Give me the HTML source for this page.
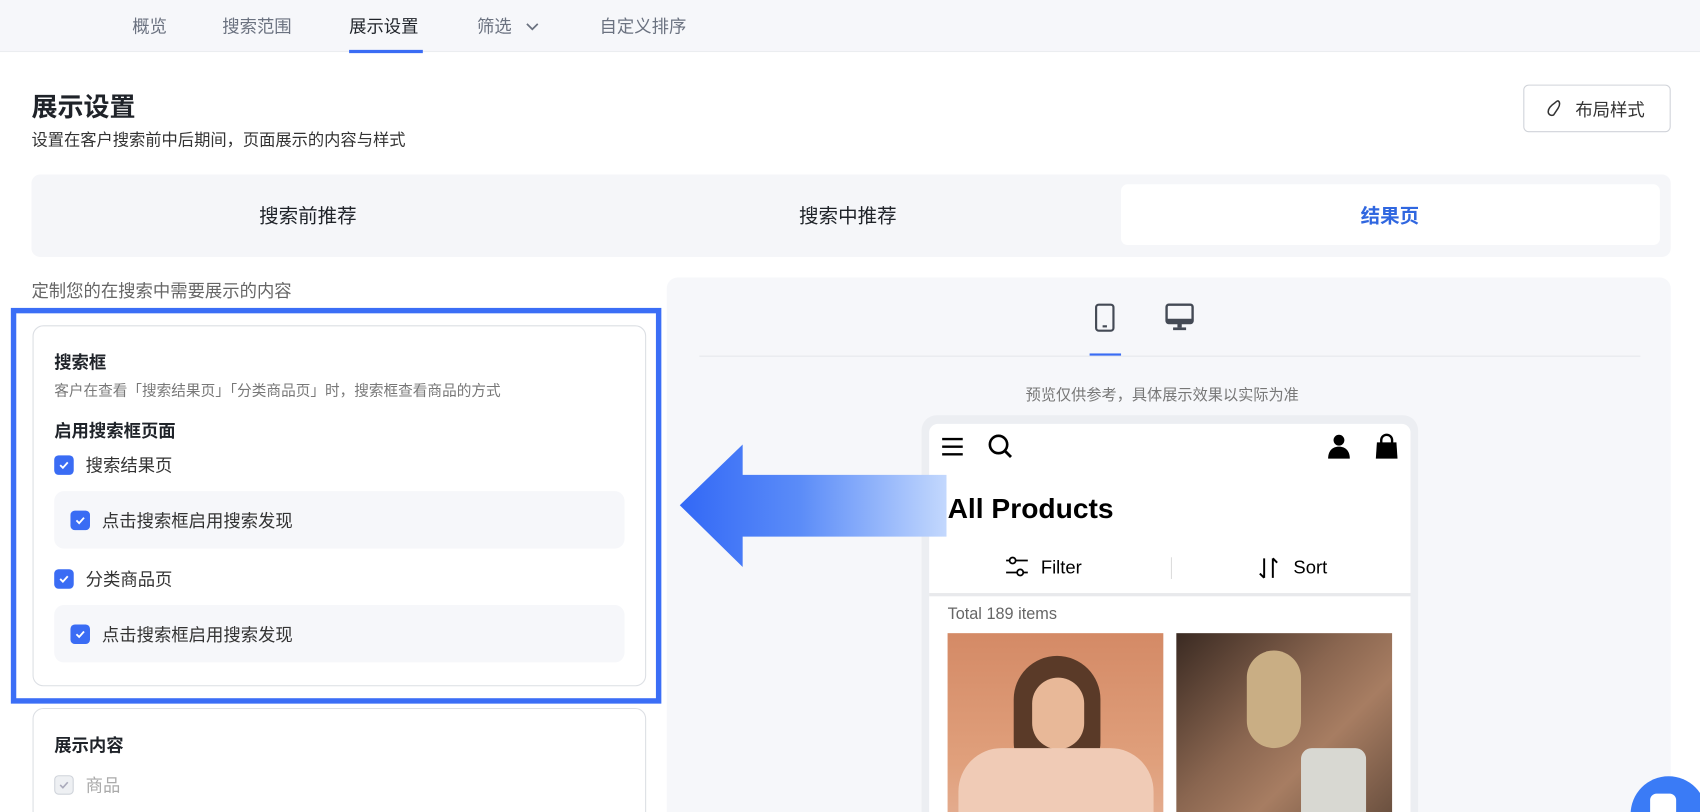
<!DOCTYPE html>
<html><head><meta charset="utf-8">
<style>
*{box-sizing:border-box;margin:0;padding:0}
html,body{width:1700px;height:812px;overflow:hidden;background:#fff}
body{font-family:"Liberation Sans","Noto Sans CJK SC",sans-serif;color:#1f2329}
#w{position:absolute;left:0;top:0;width:1568px;height:749px;transform:scale(1.08418);transform-origin:0 0;overflow:hidden;background:#fff}
.a{position:absolute}
.nav{left:0;top:0;width:1568px;height:48px;background:#f6f7fa;border-bottom:1px solid #ebedf0}
.ni{top:16px;font-size:16px;color:#6b7280}
.t{white-space:nowrap;line-height:1.3}
.cb{position:absolute;width:18px;height:18px;border-radius:4px;background:#3a6cf4}
.cb svg{position:absolute;left:3px;top:3px}
.sub{position:absolute;left:19px;width:526px;height:53px;background:#f6f7fa;border-radius:9px}
</style></head><body><div id="w">
<div class="a nav"></div>
<div class="a ni t" style="left:122px">概览</div>
<div class="a ni t" style="left:205px">搜索范围</div>
<div class="a ni t" style="left:322px;color:#1f2329">展示设置</div>
<div class="a" style="left:322px;top:46px;width:68px;height:3px;background:#3a6cf4"></div>
<div class="a ni t" style="left:440px">筛选</div>
<svg class="a" style="left:484px;top:20px" width="14" height="10" viewBox="0 0 14 10"><path d="M2 2l5 5 5-5" fill="none" stroke="#6b7280" stroke-width="1.6"/></svg>
<div class="a ni t" style="left:553px">自定义排序</div>

<div class="a t" style="left:29px;top:84px;font-size:24px;font-weight:bold">展示设置</div>
<div class="a t" style="left:29px;top:120px;font-size:15px;color:#333">设置在客户搜索前中后期间，页面展示的内容与样式</div>
<div class="a" style="left:1405px;top:78px;width:136px;height:44px;border:1px solid #d0d3d9;border-radius:5px;background:#fff"></div>
<svg class="a" style="left:1424px;top:90px" width="20" height="20" viewBox="0 0 20 20"><path d="M13 3c2 1 2 4 0 7l-4 6c-2 1-5 0-5-3 0-3 3-6 6-8 1-1 2-2 3-2z" fill="none" stroke="#333" stroke-width="1.4"/></svg>
<div class="a t" style="left:1453px;top:93px;font-size:16px;color:#333">布局样式</div>

<div class="a" style="left:29px;top:161px;width:1512px;height:76px;background:#f5f6f9;border-radius:8px"></div>
<div class="a t" style="left:239px;top:188px;font-size:18px">搜索前推荐</div>
<div class="a t" style="left:737px;top:188px;font-size:18px">搜索中推荐</div>
<div class="a" style="left:1034px;top:170px;width:497px;height:56px;background:#fff;border-radius:6px"></div>
<div class="a t" style="left:1255px;top:188px;font-size:18px;font-weight:bold;color:#3067e0">结果页</div>

<div class="a t" style="left:29px;top:260px;font-size:16px;color:#666">定制您的在搜索中需要展示的内容</div>

<div class="a" style="left:30px;top:300px;width:566px;height:333px;border:1px solid #dcdfe4;border-radius:10px;background:#fff">
 <div class="a t" style="left:19px;top:25px;font-size:16px;font-weight:bold">搜索框</div>
 <div class="a t" style="left:19px;top:51px;font-size:13.5px;color:#777">客户在查看「搜索结果页」「分类商品页」时，搜索框查看商品的方式</div>
 <div class="a t" style="left:19px;top:88px;font-size:16px;font-weight:bold">启用搜索框页面</div>
 <div class="cb" style="left:19px;top:119px"><svg width="12" height="12" viewBox="0 0 12 12"><path d="M2.5 6l2.5 2.5 4.5-5" fill="none" stroke="#fff" stroke-width="1.7"/></svg></div>
 <div class="a t" style="left:48px;top:120px;font-size:16px;color:#333">搜索结果页</div>
 <div class="sub" style="top:152px">
  <div class="cb" style="left:15px;top:18px"><svg width="12" height="12" viewBox="0 0 12 12"><path d="M2.5 6l2.5 2.5 4.5-5" fill="none" stroke="#fff" stroke-width="1.7"/></svg></div>
  <div class="a t" style="left:44px;top:19px;font-size:16px;color:#333">点击搜索框启用搜索发现</div>
 </div>
 <div class="cb" style="left:19px;top:224px"><svg width="12" height="12" viewBox="0 0 12 12"><path d="M2.5 6l2.5 2.5 4.5-5" fill="none" stroke="#fff" stroke-width="1.7"/></svg></div>
 <div class="a t" style="left:48px;top:225px;font-size:16px;color:#333">分类商品页</div>
 <div class="sub" style="top:257px">
  <div class="cb" style="left:15px;top:18px"><svg width="12" height="12" viewBox="0 0 12 12"><path d="M2.5 6l2.5 2.5 4.5-5" fill="none" stroke="#fff" stroke-width="1.7"/></svg></div>
  <div class="a t" style="left:44px;top:19px;font-size:16px;color:#333">点击搜索框启用搜索发现</div>
 </div>
</div>
<div class="a" style="left:10px;top:284px;width:600px;height:365px;border:5px solid #3b6ef6"></div>

<div class="a" style="left:30px;top:653px;width:566px;height:140px;border:1px solid #dcdfe4;border-radius:10px;background:#fff">
 <div class="a t" style="left:19px;top:25px;font-size:16px;font-weight:bold">展示内容</div>
 <div class="a" style="left:19px;top:61px;width:18px;height:18px;border:1px solid #cfd3da;border-radius:4px;background:#eef0f3"><svg style="position:absolute;left:2px;top:2px" width="12" height="12" viewBox="0 0 12 12"><path d="M2.5 6l2.5 2.5 4.5-5" fill="none" stroke="#aab" stroke-width="1.5"/></svg></div>
 <div class="a t" style="left:48px;top:62px;font-size:16px;color:#aaa">商品</div>
</div>

<div class="a" style="left:615px;top:256px;width:926px;height:520px;background:#f6f7fa;border-radius:10px"></div>
<svg class="a" style="left:1008px;top:279px" width="22" height="28" viewBox="0 0 22 28"><rect x="3" y="2" width="16" height="24" rx="2.5" fill="none" stroke="#444a55" stroke-width="2"/><rect x="9" y="21" width="4" height="2" fill="#444a55"/></svg>
<svg class="a" style="left:1074px;top:279px" width="28" height="28" viewBox="0 0 28 28"><rect x="2" y="2" width="24" height="17" rx="2" fill="none" stroke="#444a55" stroke-width="2.2"/><rect x="2" y="15" width="24" height="4" fill="#444a55"/><rect x="12" y="19" width="4" height="4" fill="#444a55"/><rect x="8" y="23" width="12" height="2.5" fill="#444a55"/></svg>
<div class="a" style="left:645px;top:328px;width:868px;height:1px;background:#e6e8ec"></div>
<div class="a" style="left:1005px;top:326px;width:29px;height:2px;background:#3a6cf4"></div>
<div class="a t" style="left:946px;top:355px;font-size:14px;color:#777">预览仅供参考，具体展示效果以实际为准</div>

<div class="a" style="left:850px;top:383px;width:458px;height:400px;background:#eceef2;border-radius:14px"></div>
<div class="a" style="left:857px;top:391px;width:444px;height:400px;background:#fff;border-radius:8px 8px 0 0"></div>
<svg class="a" style="left:868px;top:402px" width="22" height="20" viewBox="0 0 22 20"><path d="M1 3h19M1 10h19M1 17h19" stroke="#000" stroke-width="2.2"/></svg>
<svg class="a" style="left:910px;top:399px" width="26" height="26" viewBox="0 0 26 26"><circle cx="11" cy="11" r="8" fill="none" stroke="#000" stroke-width="2.4"/><path d="M16.5 16.5l6 6" stroke="#000" stroke-width="2.6"/></svg>
<svg class="a" style="left:1222px;top:399px" width="26" height="26" viewBox="0 0 26 26"><circle cx="13" cy="7" r="5" fill="#000"/><path d="M3 24c0-7 4-11 10-11s10 4 10 11z" fill="#000"/></svg>
<svg class="a" style="left:1267px;top:399px" width="24" height="26" viewBox="0 0 24 26"><path d="M7 10V7a5 5 0 0110 0v3" fill="none" stroke="#000" stroke-width="2.2"/><path d="M3 9h18l1 15H2z" fill="#000"/></svg>
<div class="a t" style="left:874px;top:453px;font-size:26px;font-weight:bold;color:#000">All Products</div>
<svg class="a" style="left:926px;top:512px" width="24" height="22" viewBox="0 0 24 22"><path d="M2 5h20M2 16h20" stroke="#000" stroke-width="1.6"/><circle cx="8" cy="5" r="2.8" fill="#fff" stroke="#000" stroke-width="1.6"/><circle cx="15" cy="16" r="2.8" fill="#fff" stroke="#000" stroke-width="1.6"/></svg>
<div class="a t" style="left:960px;top:513px;font-size:17px;color:#000">Filter</div>
<div class="a" style="left:1080px;top:514px;width:1px;height:20px;background:#ddd"></div>
<svg class="a" style="left:1158px;top:511px" width="24" height="26" viewBox="0 0 24 26"><path d="M8 22V4M4 18l4 4M16 4v18M16 4l4 4" fill="none" stroke="#000" stroke-width="1.8"/></svg>
<div class="a t" style="left:1193px;top:513px;font-size:17px;color:#000">Sort</div>
<div class="a" style="left:857px;top:547px;width:444px;height:3px;background:#e8e9ec"></div>
<div class="a t" style="left:874px;top:557px;font-size:15px;color:#666">Total 189 items</div>
<div class="a" style="left:874px;top:584px;width:199px;height:200px;background:linear-gradient(180deg,#d48a66,#e0a07c 60%,#e6b39a)"></div>
<div class="a" style="left:935px;top:605px;width:80px;height:110px;border-radius:40px 40px 30px 30px;background:#5a3a28"></div>
<div class="a" style="left:952px;top:625px;width:48px;height:66px;border-radius:24px;background:#e8b898"></div>
<div class="a" style="left:884px;top:690px;width:180px;height:80px;border-radius:40px 40px 0 0;background:#f0cbb6"></div>
<div class="a" style="left:1085px;top:584px;width:199px;height:200px;background:linear-gradient(135deg,#3a2a22,#8a6650 40%,#a77d62 60%,#5a4436)"></div>
<div class="a" style="left:1150px;top:600px;width:50px;height:90px;border-radius:25px;background:#c9ae84"></div>
<div class="a" style="left:1200px;top:690px;width:60px;height:70px;background:#d8d8d2;border-radius:10px"></div>

<svg class="a" style="left:625px;top:408px" width="250" height="118" viewBox="0 0 250 118"><defs><linearGradient id="g" x1="0" x2="1"><stop offset="0" stop-color="#3268f6"/><stop offset="0.45" stop-color="#5b8cf8"/><stop offset="1" stop-color="#c3d8fd"/></linearGradient></defs><path d="M2 58L60 2V30H248V87H60V115Z" fill="url(#g)"/></svg>

<div class="a" style="left:1504px;top:716px;width:70px;height:70px;border-radius:35px;background:#3a7bf6"></div>
<div class="a" style="left:1522px;top:732px;width:24px;height:30px;border-radius:6px;background:#fff"></div>
</div></body></html>
